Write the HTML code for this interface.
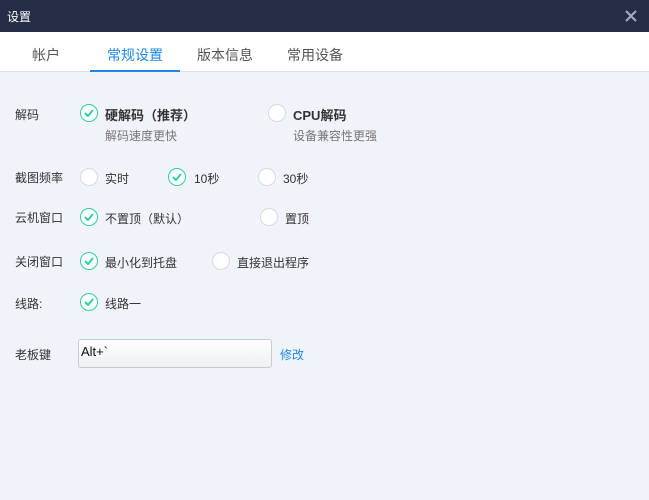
<!DOCTYPE html>
<html><head><meta charset="utf-8"><style>
*{margin:0;padding:0;box-sizing:border-box}
body{width:649px;height:500px;overflow:hidden;background:#f0f3fa;font-family:"Liberation Sans","Noto Sans CJK SC",sans-serif;position:relative;color:#333}
.t{position:absolute;white-space:nowrap}
.title{position:absolute;left:0;top:0;width:649px;height:32px;background:#252d47}
.tabs{position:absolute;left:0;top:32px;width:649px;height:40px;background:#fff;border-bottom:1px solid #dde0e8}
.r{position:absolute;width:18px;height:18px;border-radius:50%;background:#fff;border:1px solid #d6d9de}
.c{border:1.5px solid #2fcf9d}
.c svg{position:absolute;left:3px;top:4px}
.lab{font-size:12px;color:#333}
</style></head><body>
<div class="title"></div>
<div class="t" style="left:7px;top:8px;color:#fff;font-size:12px">设置</div>
<svg style="position:absolute;left:625px;top:10px" width="12" height="12"><path d="M1 1L11 11M11 1L1 11" stroke="#a9afbb" stroke-width="2"/></svg>
<div class="tabs"></div>
<div class="t" style="left:32px;top:45px;font-size:14px;color:#555">帐户</div>
<div class="t" style="left:107px;top:45px;font-size:14px;color:#1e88e5">常规设置</div>
<div style="position:absolute;left:90px;top:70px;width:90px;height:2px;background:#1e88e5"></div>
<div class="t" style="left:197px;top:45px;font-size:14px;color:#555">版本信息</div>
<div class="t" style="left:287px;top:45px;font-size:14px;color:#555">常用设备</div>

<div class="t lab" style="left:15px;top:106px">解码</div>
<div class="r c" style="left:80px;top:104px"><svg width="10" height="8"><path d="M1 4L4 7L9 1" stroke="#2fcf9d" stroke-width="2" fill="none"/></svg></div>
<div class="t" style="left:105px;top:105px;font-size:13px;font-weight:bold;color:#333">硬解码（推荐）</div>
<div class="t" style="left:105px;top:127px;font-size:12px;color:#777">解码速度更快</div>
<div class="r" style="left:268px;top:104px"></div>
<div class="t" style="left:293px;top:105px;font-size:13px;font-weight:bold;color:#333">CPU解码</div>
<div class="t" style="left:293px;top:127px;font-size:12px;color:#777">设备兼容性更强</div>

<div class="t lab" style="left:15px;top:169px">截图频率</div>
<div class="r" style="left:80px;top:168px"></div>
<div class="t lab" style="left:105px;top:170px">实时</div>
<div class="r c" style="left:168px;top:168px"><svg width="10" height="8"><path d="M1 4L4 7L9 1" stroke="#2fcf9d" stroke-width="2" fill="none"/></svg></div>
<div class="t lab" style="left:194px;top:170px">10秒</div>
<div class="r" style="left:258px;top:168px"></div>
<div class="t lab" style="left:283px;top:170px">30秒</div>

<div class="t lab" style="left:15px;top:209px">云机窗口</div>
<div class="r c" style="left:80px;top:208px"><svg width="10" height="8"><path d="M1 4L4 7L9 1" stroke="#2fcf9d" stroke-width="2" fill="none"/></svg></div>
<div class="t lab" style="left:105px;top:210px">不置顶（默认）</div>
<div class="r" style="left:260px;top:208px"></div>
<div class="t lab" style="left:285px;top:210px">置顶</div>

<div class="t lab" style="left:15px;top:253px">关闭窗口</div>
<div class="r c" style="left:80px;top:252px"><svg width="10" height="8"><path d="M1 4L4 7L9 1" stroke="#2fcf9d" stroke-width="2" fill="none"/></svg></div>
<div class="t lab" style="left:105px;top:254px">最小化到托盘</div>
<div class="r" style="left:212px;top:252px"></div>
<div class="t lab" style="left:237px;top:254px">直接退出程序</div>

<div class="t lab" style="left:15px;top:295px">线路:</div>
<div class="r c" style="left:80px;top:293px"><svg width="10" height="8"><path d="M1 4L4 7L9 1" stroke="#2fcf9d" stroke-width="2" fill="none"/></svg></div>
<div class="t lab" style="left:105px;top:295px">线路一</div>

<div class="t lab" style="left:15px;top:346px">老板键</div>
<div style="position:absolute;left:78px;top:339px;width:194px;height:29px;border:1px solid #c8cbd0;border-radius:3px;background:linear-gradient(#fff,#eef0f3)"></div>
<div class="t" style="left:81px;top:344px;font-size:13px;color:#111">Alt+`</div>
<div class="t lab" style="left:280px;top:346px;color:#1e88e5">修改</div>
</body></html>
